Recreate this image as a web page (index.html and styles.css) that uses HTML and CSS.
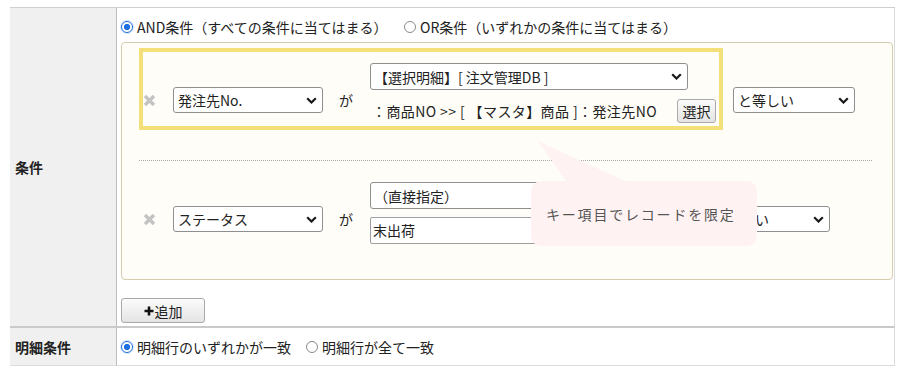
FILE: index.html
```html
<!DOCTYPE html>
<html lang="ja">
<head>
<meta charset="utf-8">
<title>条件</title>
<link rel="stylesheet" href="styles.css">
</head>
<body>
<div class="page">
  <table class="form">
    <tr class="r-cond">
      <th>条件</th>
      <td class="c-cond">
        <div class="radios">
          <label class="rd rd-and"><span class="radio on"></span>AND条件（すべての条件に当てはまる）</label>
          <label class="rd"><span class="radio"></span>OR条件（いずれかの条件に当てはまる）</label>
        </div>
        <div class="cond-box">
          <div class="cond">
            <span class="del"><svg width="13" height="13" viewBox="0 0 13 13"><path d="M2 2L11 11M11 2L2 11" stroke="#c4c4c4" stroke-width="3.4"/></svg></span>
            <div class="sel sel-field"><span>発注先No.</span><svg width="11" height="7" viewBox="0 0 11 7"><path d="M1.2 1.2L5.5 5.5L9.8 1.2" fill="none" stroke="#1a1a1a" stroke-width="2.2"/></svg></div>
            <span class="ga">が</span>
            <div class="vcol">
              <div class="sel sel-val"><span>【選択明細】[ 注文管理DB ]</span><svg width="11" height="7" viewBox="0 0 11 7"><path d="M1.2 1.2L5.5 5.5L9.8 1.2" fill="none" stroke="#1a1a1a" stroke-width="2.2"/></svg></div>
              <div class="path-line"><span class="path">：商品NO &gt;&gt; [ 【マスタ】商品 ]：発注先NO</span><button class="btn btn-sel">選択</button></div>
            </div>
            <div class="sel sel-op"><span>と等しい</span><svg width="11" height="7" viewBox="0 0 11 7"><path d="M1.2 1.2L5.5 5.5L9.8 1.2" fill="none" stroke="#1a1a1a" stroke-width="2.2"/></svg></div>
          </div>
          <div class="sep"></div>
          <div class="cond">
            <span class="del"><svg width="13" height="13" viewBox="0 0 13 13"><path d="M2 2L11 11M11 2L2 11" stroke="#c4c4c4" stroke-width="3.4"/></svg></span>
            <div class="sel sel-field"><span>ステータス</span><svg width="11" height="7" viewBox="0 0 11 7"><path d="M1.2 1.2L5.5 5.5L9.8 1.2" fill="none" stroke="#1a1a1a" stroke-width="2.2"/></svg></div>
            <span class="ga">が</span>
            <div class="vcol vcol2">
              <div class="sel sel-val2"><span>（直接指定）</span><svg width="11" height="7" viewBox="0 0 11 7"><path d="M1.2 1.2L5.5 5.5L9.8 1.2" fill="none" stroke="#1a1a1a" stroke-width="2.2"/></svg></div>
              <div class="inp">末出荷</div>
            </div>
            <div class="sel sel-op"><span>と等しい</span><svg width="11" height="7" viewBox="0 0 11 7"><path d="M1.2 1.2L5.5 5.5L9.8 1.2" fill="none" stroke="#1a1a1a" stroke-width="2.2"/></svg></div>
          </div>
          <div class="hl"></div>
          <div class="tip">
            <svg class="tip-arrow" width="100" height="41" viewBox="0 0 100 41"><polygon points="7,0 36,41 96,41" fill="#fff2f2"/></svg>
            <span>キー項目でレコードを限定</span>
          </div>
        </div>
        <div class="add-wrap">
          <button class="btn btn-add"><svg width="10" height="10" viewBox="0 0 10 10"><path d="M5 0.5V9.5M0.5 5H9.5" stroke="#111" stroke-width="2.6"/></svg>追加</button>
        </div>
      </td>
    </tr>
    <tr class="r-detail">
      <th>明細条件</th>
      <td class="c-detail">
        <div class="radios">
          <label class="rd rd-any"><span class="radio on"></span>明細行のいずれかが一致</label>
          <label class="rd"><span class="radio"></span>明細行が全て一致</label>
        </div>
      </td>
    </tr>
  </table>
</div>
</body>
</html>
```
FILE: styles.css
```css
* { box-sizing: border-box; }
body {
  margin: 0;
  font-family: "Noto Sans CJK JP", "Noto Sans", sans-serif;
  font-size: 14px;
  color: #222;
  background: #fff;
}
.page { padding: 7px 0 0 10px; }
.form {
  border-collapse: separate;
  border-spacing: 0;
  table-layout: fixed;
  width: 885px;
  border-top: 1px solid #cfcfcf;
}
.form th {
  width: 107px;
  background: #f0f0f0;
  border-right: 1px solid #bdbdbd;
  text-align: left;
  vertical-align: middle;
  padding: 0 0 0 5px;
  font-weight: bold;
  line-height: 20px;
}
.form td {
  border-right: 1px solid #dcdcdc;
  vertical-align: top;
}
.r-cond th, .r-cond td { border-bottom: 2px solid #cacaca; }
.r-detail th, .r-detail td { border-bottom: 1px solid #dcdcdc; }
.c-cond { padding: 9px 1px 3px 4px; }
.c-detail { padding: 8px 4px; }

.radios {
  display: flex;
  align-items: center;
  height: 20px;
  line-height: 20px;
}
.c-detail .radios { height: 21px; }
.rd { display: flex; align-items: center; white-space: nowrap; }
.rd-and { width: 283px; }
.rd-any { width: 185px; }
.radio {
  width: 12px;
  height: 12px;
  border-radius: 50%;
  border: 1px solid #8a8a8a;
  background: #fff;
  margin-right: 4px;
  flex: none;
}
.radio.on {
  border-color: #1f6fe0;
  background: radial-gradient(circle, #1f6fe0 0 2.8px, #fff 3.4px);
  box-shadow: 0 0 0 1px rgba(80, 140, 240, 0.25);
}

.cond-box {
  position: relative;
  margin-top: 5px;
  border: 1px solid #d5ccab;
  border-radius: 4px;
  background: #fffdf7;
  padding: 20px 0 23px 0;
}
.cond {
  display: flex;
  align-items: center;
  padding-left: 21px;
}
.del { display: block; width: 13px; height: 13px; margin-right: 17px; flex: none; }
.del svg { display: block; }
.sel {
  display: flex;
  align-items: center;
  justify-content: space-between;
  height: 26px;
  border: 1px solid #8f8f8f;
  border-radius: 3px;
  background: #fff;
  padding: 0 5px 0 4px;
  flex: none;
  white-space: nowrap;
  line-height: 20px;
}
.sel svg { flex: none; display: block; }
.sel-field { width: 150px; margin-right: 16px; }
.ga { width: 14px; margin-right: 17px; flex: none; }
.vcol {
  display: flex;
  flex-direction: column;
  align-items: flex-start;
  margin-right: 17px;
  margin-bottom: 14px;
  flex: none;
}
.sel-val { width: 318px; height: 27px; padding-left: 3px; }
.path-line {
  display: flex;
  align-items: center;
  margin-top: 9px;
  height: 24px;
  white-space: nowrap;
}
.path { width: 307px; padding-left: 2px; letter-spacing: 0.4px; }
.sel-op { width: 122px; }
.vcol2 { width: 321px; margin-bottom: 12px; }
.sel-val2 { width: 321px; height: 27px; padding-left: 3px; }
.inp {
  width: 321px;
  height: 27px;
  margin-top: 8px;
  border: 1px solid #a0a0a0;
  border-radius: 2px;
  background: #fff;
  padding-left: 2px;
  line-height: 25px;
}
.sep {
  margin: 23px 20px 21px 17px;
  border-top: 1px dotted #a8a8a8;
}
.hl {
  position: absolute;
  left: 17px;
  top: 5px;
  width: 584px;
  height: 82px;
  border: 4px solid #f3e07a;
  pointer-events: none;
}
.tip {
  position: absolute;
  left: 409px;
  top: 138px;
  width: 226px;
  height: 65px;
  border-radius: 10px;
  background: #fff2f2;
  display: flex;
  align-items: center;
  padding-left: 15px;
  color: #555;
  letter-spacing: 1.8px;
  white-space: nowrap;
}
.tip-arrow { position: absolute; left: 0; top: -40px; display: block; }

.add-wrap { margin-top: 18px; display: flex; }
.btn {
  font: inherit;
  font-size: 14px;
  color: #222;
  border: 1px solid #a9a9a9;
  border-radius: 3px;
  background: linear-gradient(#fbfbfb, #e4e4e4);
  display: flex;
  align-items: center;
  justify-content: center;
  padding: 0;
  line-height: 20px;
  flex: none;
}
.btn-add { width: 84px; height: 25px; }
.btn-add svg { margin-right: 1px; display: block; }
.btn-sel { width: 39px; height: 24px; }
```
